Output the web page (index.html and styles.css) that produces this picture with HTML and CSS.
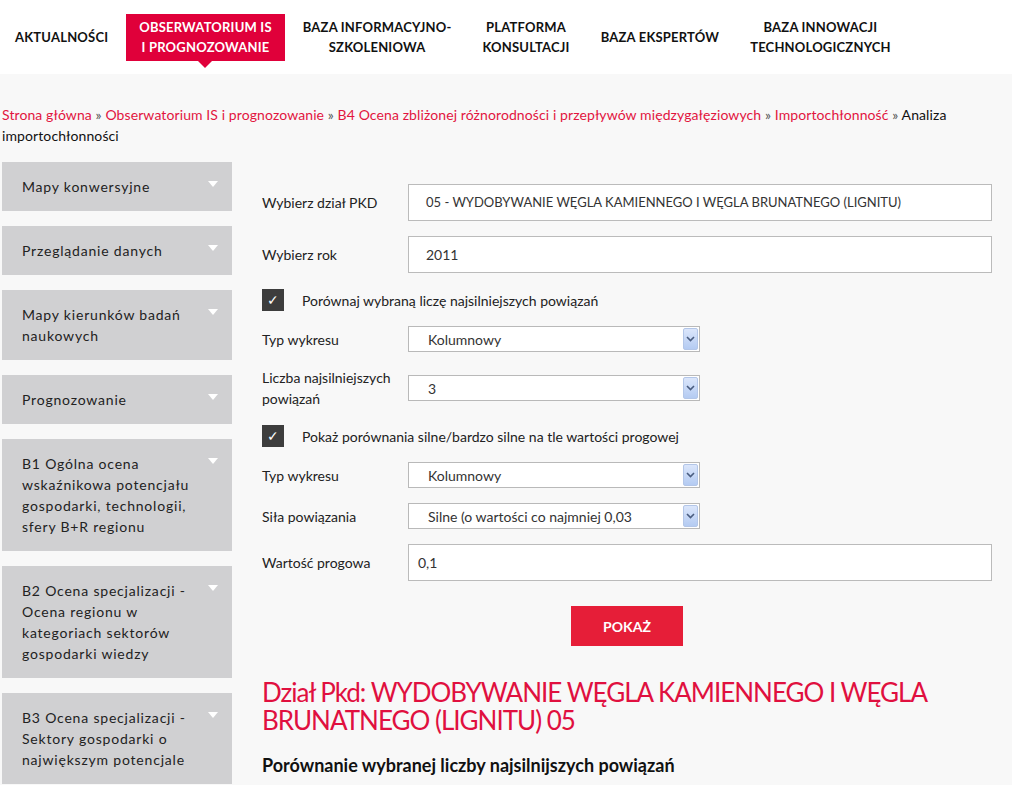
FILE: index.html
```html
<!DOCTYPE html>
<html lang="pl">
<head>
  <meta charset="UTF-8">
  <title>Analiza importochłonności</title>
  <link rel="stylesheet" href="styles.css">
</head>
<body>
  <header class="topbar">
    <nav class="menu">
      <a class="menu-item" href="#">Aktualności</a>
      <a class="menu-item active" href="#">Obserwatorium IS<br>i prognozowanie</a>
      <a class="menu-item" href="#">Baza informacyjno-<br>szkoleniowa</a>
      <a class="menu-item" href="#">Platforma<br>konsultacji</a>
      <a class="menu-item" href="#">Baza ekspertów</a>
      <a class="menu-item" href="#">Baza innowacji<br>technologicznych</a>
    </nav>
  </header>

  <div class="page">
    <div class="breadcrumb">
      <a href="#">Strona główna</a> <span class="sep">»</span>
      <a href="#">Obserwatorium IS i prognozowanie</a> <span class="sep">»</span>
      <a href="#">B4 Ocena zbliżonej różnorodności i przepływów międzygałęziowych</a> <span class="sep">»</span>
      <a href="#">Importochłonność</a> <span class="sep">»</span>
      Analiza importochłonności
    </div>

    <div class="layout">
      <aside class="sidebar">
        <div class="side-item"><span>Mapy konwersyjne</span><i class="tri"></i></div>
        <div class="side-item"><span>Przeglądanie danych</span><i class="tri"></i></div>
        <div class="side-item"><span>Mapy kierunków badań naukowych</span><i class="tri"></i></div>
        <div class="side-item"><span>Prognozowanie</span><i class="tri"></i></div>
        <div class="side-item"><span>B1 Ogólna ocena wskaźnikowa potencjału gospodarki, technologii, sfery B+R regionu</span><i class="tri"></i></div>
        <div class="side-item"><span>B2 Ocena specjalizacji - Ocena regionu w kategoriach sektorów gospodarki wiedzy</span><i class="tri"></i></div>
        <div class="side-item"><span>B3 Ocena specjalizacji - Sektory gospodarki o największym potencjale</span><i class="tri"></i></div>
      </aside>

      <main class="content">
        <div class="form">
          <div class="row">
            <label class="lbl">Wybierz dział PKD</label>
            <div class="field wide caps">05 - WYDOBYWANIE WĘGLA KAMIENNEGO I WĘGLA BRUNATNEGO (LIGNITU)</div>
          </div>
          <div class="row">
            <label class="lbl">Wybierz rok</label>
            <div class="field wide">2011</div>
          </div>
          <div class="row check-row">
            <span class="check">&#10003;</span>
            <span>Porównaj wybraną liczę najsilniejszych powiązań</span>
          </div>
          <div class="row">
            <label class="lbl">Typ wykresu</label>
            <div class="select"><span>Kolumnowy</span><span class="select-btn"><svg width="9" height="6" viewBox="0 0 9 6"><path d="M1 1l3.5 3.5L8 1" fill="none" stroke="#4a5d80" stroke-width="1.6"/></svg></span></div>
          </div>
          <div class="row">
            <label class="lbl">Liczba najsilniejszych powiązań</label>
            <div class="select"><span>3</span><span class="select-btn"><svg width="9" height="6" viewBox="0 0 9 6"><path d="M1 1l3.5 3.5L8 1" fill="none" stroke="#4a5d80" stroke-width="1.6"/></svg></span></div>
          </div>
          <div class="row check-row">
            <span class="check">&#10003;</span>
            <span>Pokaż porównania silne/bardzo silne na tle wartości progowej</span>
          </div>
          <div class="row">
            <label class="lbl">Typ wykresu</label>
            <div class="select"><span>Kolumnowy</span><span class="select-btn"><svg width="9" height="6" viewBox="0 0 9 6"><path d="M1 1l3.5 3.5L8 1" fill="none" stroke="#4a5d80" stroke-width="1.6"/></svg></span></div>
          </div>
          <div class="row">
            <label class="lbl">Siła powiązania</label>
            <div class="select"><span>Silne (o wartości co najmniej 0,03</span><span class="select-btn"><svg width="9" height="6" viewBox="0 0 9 6"><path d="M1 1l3.5 3.5L8 1" fill="none" stroke="#4a5d80" stroke-width="1.6"/></svg></span></div>
          </div>
          <div class="row">
            <label class="lbl">Wartość progowa</label>
            <div class="field wide small-pad">0,1</div>
          </div>
          <div class="actions">
            <button class="btn">POKAŻ</button>
          </div>
        </div>

        <h1 class="title">Dział Pkd: WYDOBYWANIE WĘGLA KAMIENNEGO I WĘGLA BRUNATNEGO (LIGNITU) 05</h1>
        <h3 class="subtitle">Porównanie wybranej liczby najsilnijszych powiązań</h3>
      </main>
    </div>
  </div>
</body>
</html>
```

FILE: styles.css
```css
body {
  margin: 0;
  font-family: Lato, "Open Sans", sans-serif;
  font-size: 14px;
  color: #222;
  background: #f8f8f8;
}
a { text-decoration: none; }

/* top menu */
.topbar {
  background: #fff;
  height: 74px;
}
.menu {
  display: flex;
  align-items: center;
  gap: 5px;
  height: 100%;
  padding-left: 2px;
}
.menu-item {
  position: relative;
  padding: 3px 13px 4px;
  font-size: 13px;
  font-weight: bold;
  line-height: 20px;
  letter-spacing: 0.2px;
  text-transform: uppercase;
  text-align: center;
  color: #111;
}
.menu-item.active {
  background: #e0003a;
  color: #fff;
}
.menu-item.active::after {
  content: "";
  position: absolute;
  left: 50%;
  bottom: -7px;
  margin-left: -7px;
  border-left: 7px solid transparent;
  border-right: 7px solid transparent;
  border-top: 7px solid #e0003a;
}

.page {
  padding: 30px 20px 0 2px;
}
.breadcrumb {
  line-height: 21px;
  color: #111;
  letter-spacing: 0.1px;
}
.breadcrumb a { color: #e2153f; }
.breadcrumb .sep { color: #555; }

.layout {
  display: flex;
  gap: 30px;
  margin-top: 16px;
}

/* sidebar */
.sidebar {
  width: 230px;
  flex-shrink: 0;
}
.side-item {
  display: flex;
  justify-content: space-between;
  align-items: flex-start;
  background: #d0d0d2;
  padding: 14px 14px 14px 20px;
  margin-bottom: 15px;
  line-height: 21px;
  color: #222;
  letter-spacing: 0.8px;
}
.tri {
  flex-shrink: 0;
  margin-top: 5px;
  margin-left: 10px;
  border-left: 5px solid transparent;
  border-right: 5px solid transparent;
  border-top: 6px solid #fff;
}

/* form */
.content {
  flex: 1;
  padding-top: 22px;
}
.row {
  display: flex;
  align-items: center;
  margin-bottom: 15px;
}
.lbl {
  width: 146px;
  flex-shrink: 0;
  line-height: 21px;
  padding-right: 10px;
  box-sizing: border-box;
}
.field {
  background: #fff;
  border: 1px solid #bbb;
  height: 37px;
  line-height: 35px;
  padding: 0 17px;
  box-sizing: border-box;
  color: #333;
}
.field.wide { flex: 1; }
.field.caps { font-size: 13px; }
.field.small-pad { padding-left: 9px; }

.select {
  display: flex;
  justify-content: space-between;
  align-items: center;
  width: 292px;
  height: 26px;
  box-sizing: border-box;
  border: 1px solid #b9b9b9;
  background: #fff;
  padding: 1px 1px 1px 19px;
  color: #333;
}
.select-btn {
  display: flex;
  align-items: center;
  justify-content: center;
  width: 15px;
  height: 22px;
  box-sizing: border-box;
  border: 1px solid #b3c6e8;
  border-radius: 2px;
  background: linear-gradient(#dbe6fb, #b4cbf2);
}

.check-row {
  height: 22px;
  margin-top: 16px;
}
.check {
  width: 22px;
  height: 22px;
  background: #3d3d3d;
  color: #fff;
  font-size: 14px;
  line-height: 22px;
  text-align: center;
  margin-right: 18px;
}

.actions {
  text-align: center;
  margin-top: 25px;
}
.btn {
  width: 112px;
  height: 40px;
  border: none;
  background: #e61e38;
  color: #fff;
  font-family: inherit;
  font-size: 14px;
  font-weight: bold;
  cursor: pointer;
}

.title {
  margin: 32px 0 0;
  font-size: 26px;
  font-weight: normal;
  line-height: 28px;
  color: #e0103f;
  letter-spacing: -1px;
}
.subtitle {
  margin: 20px 0 0;
  font-size: 18px;
  line-height: 22px;
  color: #111;
}
```
